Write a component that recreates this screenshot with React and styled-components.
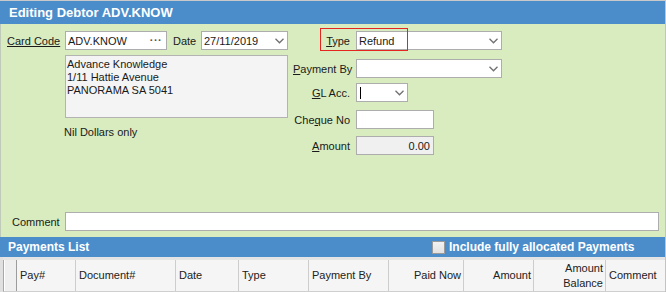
import React from "react";
import styled, { createGlobalStyle } from "styled-components";

const GlobalStyle = createGlobalStyle`
  html, body { margin: 0; padding: 0; background: #ffffff; }
  body { font-family: "Liberation Sans", Arial, sans-serif; font-size: 11px; color: #1a1a1a; }
`;

const Window = styled.div`
  width: 666px;
  height: 292px;
  box-sizing: border-box;
  border-top: 1px solid #c9c9c9;
  border-right: 1px solid #c4c4c4;
  overflow: hidden;
  display: flex;
  flex-direction: column;
`;

const TitleBar = styled.div`
  height: 23px;
  flex: none;
  background: #4a8dca;
  color: #ffffff;
  font-weight: bold;
  font-size: 13px;
  display: flex;
  align-items: center;
  padding-left: 9px;
`;

const Body = styled.div`
  height: 213px;
  flex: none;
  box-sizing: border-box;
  background: #d8ecc0;
  border-left: 1px solid #bfcab8;
  display: flex;
  flex-direction: column;
  padding: 7px 0 6px 6px;
`;

const Top = styled.div`
  display: flex;
  flex: 1;
`;

const LeftCol = styled.div`
  width: 280px;
  display: flex;
  flex-direction: column;
`;

const Row = styled.div`
  display: flex;
  align-items: center;
  height: 19px;
  margin-top: ${p => p.$mt || 0}px;
  position: relative;
`;

const Label = styled.label`
  width: ${p => p.$w}px;
  flex: none;
  text-align: ${p => p.$right ? "right" : "left"};
  padding-right: ${p => p.$right ? 6 : 0}px;
  box-sizing: border-box;
  text-decoration: ${p => p.$under ? "underline" : "none"};
  white-space: nowrap;
  u { text-decoration: underline; }
`;

const Input = styled.div`
  width: ${p => p.$w}px;
  height: 19px;
  flex: none;
  box-sizing: border-box;
  border: 1px solid #adadad;
  background: ${p => p.$grey ? "#f0f0f0" : "#ffffff"};
  display: flex;
  align-items: center;
  justify-content: ${p => p.$right ? "flex-end" : "flex-start"};
  padding: 0 3px 0 2px;
  white-space: nowrap;
`;

const InputText = styled.span`
  flex: 1;
  text-align: ${p => p.$right ? "right" : "left"};
`;

const Caret = styled.span`
  width: 1px;
  height: 12px;
  background: #000000;
  margin-left: 1px;
  flex: 1 0 auto;
  max-width: 1px;
  margin-right: auto;
`;

const Dots = styled.span`
  color: #555555;
  font-weight: bold;
  letter-spacing: 1px;
  margin-right: 1px;
  line-height: 1;
  position: relative;
  top: -3px;
`;

const Chevron = () => (
  <svg width="9" height="6" viewBox="0 0 9 6" style={{ flex: "none", marginLeft: "auto" }}>
    <polyline points="0.5,0.8 4.5,4.8 8.5,0.8" fill="none" stroke="#707070" strokeWidth="1.3" />
  </svg>
);

const Gap = styled.span`
  width: ${p => p.$w}px;
  flex: none;
`;

const Address = styled.div`
  margin: 5px 0 0 58px;
  width: 223px;
  height: 63px;
  box-sizing: border-box;
  border: 1px solid #b3b3b3;
  background: #f4f4f4;
  padding: 2px 1px;
  line-height: 13px;
`;

const Words = styled.div`
  margin: 8px 0 0 57px;
`;

const RightCol = styled.div`
  display: flex;
  flex-direction: column;
  margin-left: 6px;
`;

const Highlight = styled.div`
  position: absolute;
  left: 27px;
  top: -3px;
  width: 88px;
  height: 23px;
  box-sizing: border-box;
  border: 1px solid #e52620;
  pointer-events: none;
`;

const CommentRow = styled.div`
  display: flex;
  align-items: center;
  height: 19px;
`;

const CommentLabel = styled.span`
  width: 58px;
  padding-left: 5px;
  box-sizing: border-box;
  flex: none;
`;

const ListBar = styled.div`
  height: 20px;
  flex: none;
  background: #4a8dca;
  color: #ffffff;
  font-weight: bold;
  font-size: 12px;
  display: flex;
  align-items: center;
  padding: 0 0 0 8px;
`;

const ListTitle = styled.span`
  flex: 1;
`;

const Check = styled.span`
  width: 13px;
  height: 13px;
  box-sizing: border-box;
  border: 1px solid #9a9a9a;
  background: linear-gradient(#f2f2f2, #e2e2e2);
  margin-right: 4px;
`;

const CheckText = styled.span`
  width: 216px;
  font-size: 12px;
`;

const Grid = styled.div`
  flex: 1;
  background: #e4e4e4;
  padding-top: 3px;
  border-left: 3px solid #e0e0e0;
`;

const HeaderRow = styled.div`
  display: grid;
  grid-template-columns: 13px 59px 100px 63px 70px 80px 75px 70px 72px 1fr;
  height: 31px;
  background: #f5f5f5;
  border-left: 1px solid #a8a8a8;
  border-bottom: 1px solid #cfcfcf;
`;

const HeadCell = styled.div`
  border-right: 1px solid ${p => p.$ind ? "#9c9c9c" : "#cdcdcd"};
  border-left: ${p => p.$ind ? "1px solid #ffffff" : "none"};
  background: ${p => p.$ind ? "#efefef" : "transparent"};
  display: flex;
  align-items: center;
  justify-content: ${p => p.$right ? "flex-end" : "flex-start"};
  text-align: ${p => p.$right ? "right" : "left"};
  padding: ${p => p.$ind ? "0" : p.$right ? "0 2px 0 0" : "0 0 0 3px"};
  line-height: 15px;
  color: #222222;
  white-space: nowrap;
  &:last-child { border-right: none; }
`;

const columns = [
  { t: "Pay#" },
  { t: "Document#" },
  { t: "Date" },
  { t: "Type" },
  { t: "Payment By" },
  { t: "Paid Now", right: true },
  { t: "Amount", right: true },
  { t: <>Amount<br />Balance</>, right: true },
  { t: "Comment" },
];

export default function App() {
  return (
    <>
      <GlobalStyle />
      <Window>
        <TitleBar>Editing Debtor ADV.KNOW</TitleBar>
        <Body>
          <Top>
            <LeftCol>
              <Row>
                <Label $w={58} $under>Card Code</Label>
                <Input $w={102}>
                  <InputText>ADV.KNOW</InputText>
                  <Dots>...</Dots>
                </Input>
                <Gap $w={6} />
                <Label $w={28}>Date</Label>
                <Input $w={87}>
                  <InputText>27/11/2019</InputText>
                  <Chevron />
                </Input>
              </Row>
              <Address>
                Advance Knowledge<br />
                1/11 Hattie Avenue<br />
                PANORAMA SA 5041
              </Address>
              <Words>Nil Dollars only</Words>
            </LeftCol>
            <RightCol>
              <Row>
                <Label $w={63} $right><u>T</u>ype</Label>
                <Input $w={146}>
                  <InputText>Refund</InputText>
                  <Chevron />
                </Input>
                <Highlight />
              </Row>
              <Row $mt={9}>
                <Label $w={63} $right><u>P</u>ayment By</Label>
                <Input $w={146}>
                  <Chevron />
                </Input>
              </Row>
              <Row $mt={5}>
                <Label $w={63} $right><u>G</u>L Acc.</Label>
                <Input $w={52}>
                  <Caret />
                  <Chevron />
                </Input>
              </Row>
              <Row $mt={8}>
                <Label $w={63} $right>Che<u>q</u>ue No</Label>
                <Input $w={78} />
              </Row>
              <Row $mt={7}>
                <Label $w={63} $right><u>A</u>mount</Label>
                <Input $w={78} $grey>
                  <InputText $right>0.00</InputText>
                </Input>
              </Row>
            </RightCol>
          </Top>
          <CommentRow>
            <CommentLabel>Comment</CommentLabel>
            <Input $w={594} />
          </CommentRow>
        </Body>
        <ListBar>
          <ListTitle>Payments List</ListTitle>
          <Check />
          <CheckText>Include fully allocated Payments</CheckText>
        </ListBar>
        <Grid>
          <HeaderRow>
            <HeadCell $ind />
            {columns.map((c, i) => (
              <HeadCell key={i} $right={c.right}>{c.t}</HeadCell>
            ))}
          </HeaderRow>
        </Grid>
      </Window>
    </>
  );
}
